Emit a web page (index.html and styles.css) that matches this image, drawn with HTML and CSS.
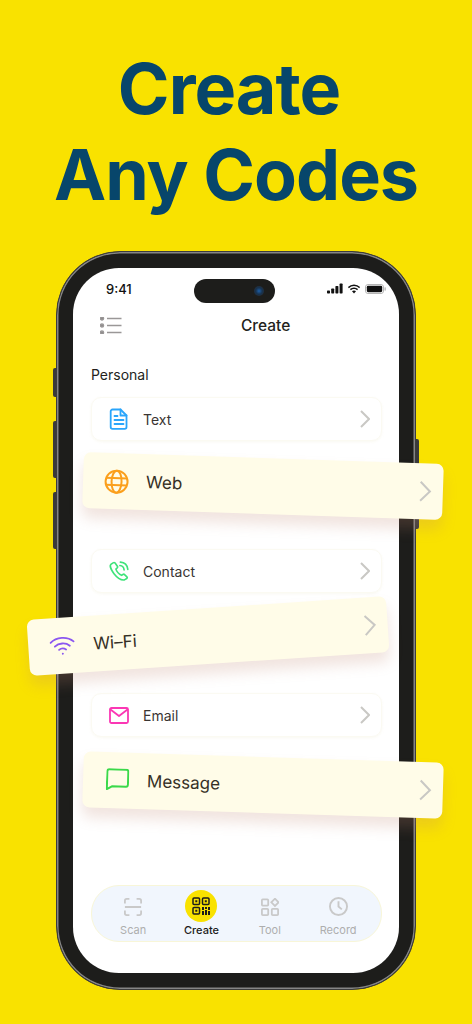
FILE: index.html
```html
<!DOCTYPE html>
<html>
<head>
    <meta charset="utf-8">
    <link rel="stylesheet" href="styles.css">
</head>
<body>

<h1 class="headline"><span class="line-one">Create</span><br>Any Codes</h1>

<div class="phone">
    <span class="side-btn mute"></span>
    <span class="side-btn vol-up"></span>
    <span class="side-btn vol-down"></span>
    <span class="side-btn power"></span>

    <div class="screen">
        <div class="status-bar">
            <span class="time">9:41</span>
            <div class="island"><span class="camera"></span></div>
            <div class="status-icons">
                <svg width="16" height="11" viewBox="0 0 16 10"><rect x="0" y="7" width="3" height="3" rx=".7"/><rect x="4.2" y="5" width="3" height="5" rx=".7"/><rect x="8.4" y="2.5" width="3" height="7.5" rx=".7"/><rect x="12.6" y="0" width="3" height="10" rx=".7"/></svg>
                <svg width="14" height="10" viewBox="0 0 14 10"><path d="M7 2.1c2 0 3.800.8 5.100 2.100l1-1.100A8.700 8.700 0 0 0 7 .5 8.700 8.700 0 0 0 .9 3.100l1 1.100A7.200 7.200 0 0 1 7 2.100z"/><path d="M7 5c1.200 0 2.300.5 3.100 1.200l1-1.100A6 6 0 0 0 7 3.500a6 6 0 0 0-4.100 1.600l1 1.100C4.700 5.500 5.800 5 7 5z"/><path d="M7 6.500c-.8 0-1.500.3-2 .8L7 9.600l2-2.300c-.5-.5-1.200-.8-2-.8z"/></svg>
                <svg width="21" height="10" viewBox="0 0 21 10"><rect x=".5" y=".5" width="18" height="9" rx="2.500" fill="none" stroke="#b5b5b5"/><rect x="1.800" y="1.800" width="15.400" height="6.400" rx="1.400"/><rect x="19.500" y="3.300" width="1.300" height="3.400" rx=".6" fill="#b5b5b5"/></svg>
            </div>
        </div>

        <div class="top-bar">
            <svg class="menu-icon" width="22" height="17" viewBox="0 0 22 17">
                <circle cx="2" cy="1.500" r="1.600"/><circle cx="2" cy="8.500" r="1.600"/><circle cx="2" cy="15.500" r="1.600"/>
                <path d="M7 1.500h14.500M7 8.500h14.500M7 15.500h14.500"/>
            </svg>
            <div class="page-title">Create</div>
        </div>

        <div class="section-label">Personal</div>

        <div class="row">
            <svg class="row-icon" width="20" height="22" viewBox="0 0 20 22" fill="none" stroke="#2aa5fb" stroke-width="1.800" stroke-linejoin="round" stroke-linecap="round"><path d="M3.500 1.500h8l6 6v11.500a1.800 1.800 0 0 1-1.800 1.800H3.500A1.800 1.800 0 0 1 1.700 19V3.300a1.800 1.800 0 0 1 1.800-1.800z"/><path d="M11.500 1.500v6h6M5.500 8h3M5.500 12h9M5.500 16h9"/></svg>
            <span class="row-text">Text</span>
            <svg class="chevron" width="10" height="18" viewBox="0 0 10 18"><path d="M1 1l8 8-8 8"/></svg>
        </div>

        <div class="row row-contact">
            <svg class="row-icon" width="20" height="20" viewBox="0 0 22 22" fill="none" stroke="#3fe37a" stroke-width="1.800" stroke-linejoin="round" stroke-linecap="round"><path d="M4.500 2L2 3.800C.9 5 1.700 9 5.500 14c3.700 4.700 8.500 7.300 11.500 6.800l2.500-1.500c.7-.5.8-1.300.2-1.900l-2.600-2.500c-.5-.5-1.200-.5-1.800-.1l-1.500 1c-2.500-1-5.500-4.500-6.200-7l1.400-1.200c.5-.5.6-1.200.2-1.800L6.700 2.300C6.100 1.600 5.200 1.500 4.500 2z"/><path d="M12 5c2.500.2 4.300 2 4.600 4.700M12.500 1.200c4.500.3 7.700 3.500 8.200 8"/></svg>
            <span class="row-text">Contact</span>
            <svg class="chevron" width="10" height="18" viewBox="0 0 10 18"><path d="M1 1l8 8-8 8"/></svg>
        </div>

        <div class="row row-email">
            <svg class="row-icon" width="20" height="17" viewBox="0 0 20 17" fill="none" stroke="#fb37b4" stroke-width="1.800" stroke-linejoin="round" stroke-linecap="round"><rect x="1" y="1" width="18" height="15" rx="1.500"/><path d="M1.500 2.500L10 9l8.500-6.500"/></svg>
            <span class="row-text">Email</span>
            <svg class="chevron" width="10" height="18" viewBox="0 0 10 18"><path d="M1 1l8 8-8 8"/></svg>
        </div>

        <div class="tab-bar">
            <div class="tab">
                <svg width="18" height="18" viewBox="0 0 20 20"><path d="M1 6V3a2 2 0 0 1 2-2h3M14 1h3a2 2 0 0 1 2 2v3M19 14v3a2 2 0 0 1-2 2h-3M6 19H3a2 2 0 0 1-2-2v-3M1 10h18"/></svg>
                <span>Scan</span>
            </div>
            <div class="tab active">
                <div class="tab-badge">
                    <svg width="18" height="18" viewBox="0 0 18 18" fill="none" stroke="#1d1d1b" stroke-width="1.500"><rect x="1" y="1" width="6.500" height="6.500" rx="1"/><rect x="10.500" y="1" width="6.500" height="6.500" rx="1"/><rect x="1" y="10.500" width="6.500" height="6.500" rx="1"/><path fill="#1d1d1b" stroke="none" d="M3.300 3.300h2v2h-2zM12.800 3.300h2v2h-2zM3.300 12.800h2v2h-2zM10 10h2v3h-2zM13 10h2v2h-2zM16 10h2v3h-2zM10 14h2v4h-2zM13 13h2v5h-2zM16 14h2v4h-2z"/></svg>
                </div>
                <span>Create</span>
            </div>
            <div class="tab">
                <svg width="18" height="18" viewBox="0 0 20 20"><rect x="1" y="1.500" width="7" height="7" rx="1"/><path d="M15.500 .8l4 4-4 4-4-4z"/><rect x="1" y="12" width="7" height="7" rx="1"/><rect x="12" y="12" width="7" height="7" rx="1"/></svg>
                <span>Tool</span>
            </div>
            <div class="tab">
                <svg width="19" height="19" viewBox="0 0 20 20"><circle cx="10" cy="10" r="9"/><path d="M10 4.500V10l3.500 3"/></svg>
                <span>Record</span>
            </div>
        </div>
    </div>

    <div class="float-card card-web">
        <svg class="row-icon" width="25" height="25" viewBox="0 0 25 25" fill="none" stroke="#fb9f1c" stroke-width="2"><circle cx="12.500" cy="12.500" r="11"/><ellipse cx="12.500" cy="12.500" rx="5" ry="11"/><path d="M2 9h21M2 16h21"/></svg>
        <span class="float-text">Web</span>
        <svg class="chevron" width="13" height="22" viewBox="0 0 13 22"><path d="M1.500 1.500L11 11l-9.500 9.500"/></svg>
    </div>

    <div class="float-card card-wifi">
        <svg class="row-icon" width="26" height="20" viewBox="0 0 26 20" fill="none" stroke="#8b57f0" stroke-width="1.800" stroke-linecap="round"><path d="M1.500 6.500C7.500 .8 18.500 .8 24.500 6.500M5.500 10.500c4-3.600 11-3.600 15 0M9.500 14c2-1.500 5-1.500 7 0"/><circle cx="13" cy="18" r="1" fill="#8b57f0" stroke="none"/></svg>
        <span class="float-text">Wi–Fi</span>
        <svg class="chevron" width="13" height="22" viewBox="0 0 13 22"><path d="M1.500 1.500L11 11l-9.500 9.500"/></svg>
    </div>

    <div class="float-card card-message">
        <svg class="row-icon" width="23" height="22" viewBox="0 0 23 22" fill="none" stroke="#3ad94a" stroke-width="2" stroke-linejoin="round"><path d="M3 1h17a2 2 0 0 1 2 2v13a2 2 0 0 1-2 2H6L1 21V3a2 2 0 0 1 2-2z"/></svg>
        <span class="float-text">Message</span>
        <svg class="chevron" width="13" height="22" viewBox="0 0 13 22"><path d="M1.500 1.500L11 11l-9.500 9.500"/></svg>
    </div>
</div>

</body>
</html>
```
FILE: styles.css
```css
body {
    margin: 0;
    height: 1024px;
    overflow: hidden;
    background: #f9e200;
    font-family: Inter, "Liberation Sans", sans-serif;
    color: #231f1c;
}
.headline {
    margin: 0;
    padding-top: 46px;
    height: 205px;
    box-sizing: border-box;
    text-align: center;
    font-size: 70px;
    line-height: 86px;
    font-weight: 700;
    letter-spacing: -1px;
    color: #07466b;
}
.line-one {
    margin-right: 14px;
}
.phone {
    position: relative;
    box-sizing: border-box;
    width: 360px;
    height: 739px;
    margin: 46px auto 0;
    padding: 16px;
    background: #1d1d1b;
    border: 1px solid #3c3c3c;
    border-radius: 64px;
    box-shadow: inset 0 0 0 1.5px #858585;
}
.side-btn {
    position: absolute;
    width: 3px;
    background: #3a3a3a;
}
.mute { left: -4px; top: 116px; height: 29px; border-radius: 2px 0 0 2px; }
.vol-up { left: -4px; top: 169px; height: 57px; border-radius: 2px 0 0 2px; }
.vol-down { left: -4px; top: 240px; height: 57px; border-radius: 2px 0 0 2px; }
.power { right: -4px; top: 187px; height: 90px; border-radius: 0 2px 2px 0; }
.screen {
    display: flex;
    flex-direction: column;
    box-sizing: border-box;
    height: 705px;
    padding: 0 17px 31px 18px;
    background: white;
    border-radius: 46px;
}
.status-bar {
    display: flex;
    align-items: center;
    height: 24px;
    margin: 11px -4px 0 0;
    padding-left: 15px;
}
.time {
    width: 24px;
    margin-bottom: 5px;
    font-size: 13px;
    font-weight: 500;
    color: #111;
}
.island {
    position: relative;
    width: 81px;
    height: 24px;
    border-radius: 12px;
    background: #1d1d1b;
    margin-left: 64px;
}
.camera {
    position: absolute;
    right: 11px;
    top: 7px;
    width: 10px;
    height: 10px;
    border-radius: 50%;
    background: radial-gradient(circle, #1d5fa8 0, #17324f 45%, #2b2b2b 100%);
}
.status-icons {
    display: flex;
    align-items: center;
    gap: 4px;
    margin-left: auto;
    margin-bottom: 5px;
    fill: #111;
}
.top-bar {
    position: relative;
    height: 34px;
    margin-top: 5px;
    display: flex;
    align-items: center;
}
.menu-icon {
    margin-left: 9px;
    fill: #8f8c8c;
    stroke: #9a9797;
    stroke-width: 1.3;
}
.page-title {
    position: absolute;
    left: 150px;
    font-size: 15.5px;
    font-weight: 500;
}
.section-label {
    margin-top: 24px;
    font-size: 14px;
    line-height: 17px;
}
.row {
    display: flex;
    align-items: center;
    box-sizing: border-box;
    height: 44px;
    margin-top: 14px;
    padding: 0 11px 0 17px;
    border: 1px solid #fbfaf2;
    border-radius: 10px;
    box-shadow: 0 1px 3px rgba(230, 225, 190, 0.2);
}
.row-contact { margin-top: 108px; }
.row-email { margin-top: 100px; }
.row-text {
    margin-left: 14px;
    font-size: 14px;
    color: #3a3533;
}
.chevron {
    margin-left: auto;
    fill: none;
    stroke: #c9c8c4;
    stroke-width: 2;
}
.tab-bar {
    display: flex;
    box-sizing: border-box;
    height: 57px;
    margin-top: auto;
    padding: 0 7px;
    background: #f1f6fd;
    border: 1px solid #f8f6d8;
    border-radius: 28px;
}
.tab {
    display: flex;
    flex-direction: column;
    align-items: center;
    justify-content: flex-end;
    width: 68.33px;
    flex: none;
    padding-bottom: 4px;
    font-size: 11px;
    line-height: 14px;
    color: #aeaeae;
}
.tab svg {
    fill: none;
    stroke: #c9c9c9;
    stroke-width: 2;
    margin-bottom: 7px;
}
.tab.active {
    color: #1d1d1b;
    font-weight: 500;
}
.tab-badge {
    display: flex;
    align-items: center;
    justify-content: center;
    width: 32px;
    height: 32px;
    border-radius: 50%;
    background: #f9e200;
    margin-bottom: 1px;
}
.tab-badge svg {
    stroke: #1d1d1b;
    stroke-width: 1.5;
    margin-bottom: 0;
}
.float-card {
    position: absolute;
    display: flex;
    align-items: center;
    box-sizing: border-box;
    width: 360px;
    height: 56px;
    padding: 0 11px 0 21px;
    background: #fffce8;
    border-radius: 7px;
    box-shadow: 0 10px 14px rgba(190, 130, 110, 0.22);
}
.float-text {
    margin-left: 17px;
    font-size: 17px;
    color: #352f25;
}
.card-web { left: 26px; top: 206px; transform: rotate(1.9deg); }
.card-wifi { left: -29px; top: 356px; transform: rotate(-3.8deg); }
.card-wifi .float-text { margin-left: 18px; }
.card-message { left: 26px; top: 505px; transform: rotate(1.8deg); }
.card-message .row-icon { margin: -3px 0 0 2px; }
.card-message .float-text { margin-left: 18px; }
```
